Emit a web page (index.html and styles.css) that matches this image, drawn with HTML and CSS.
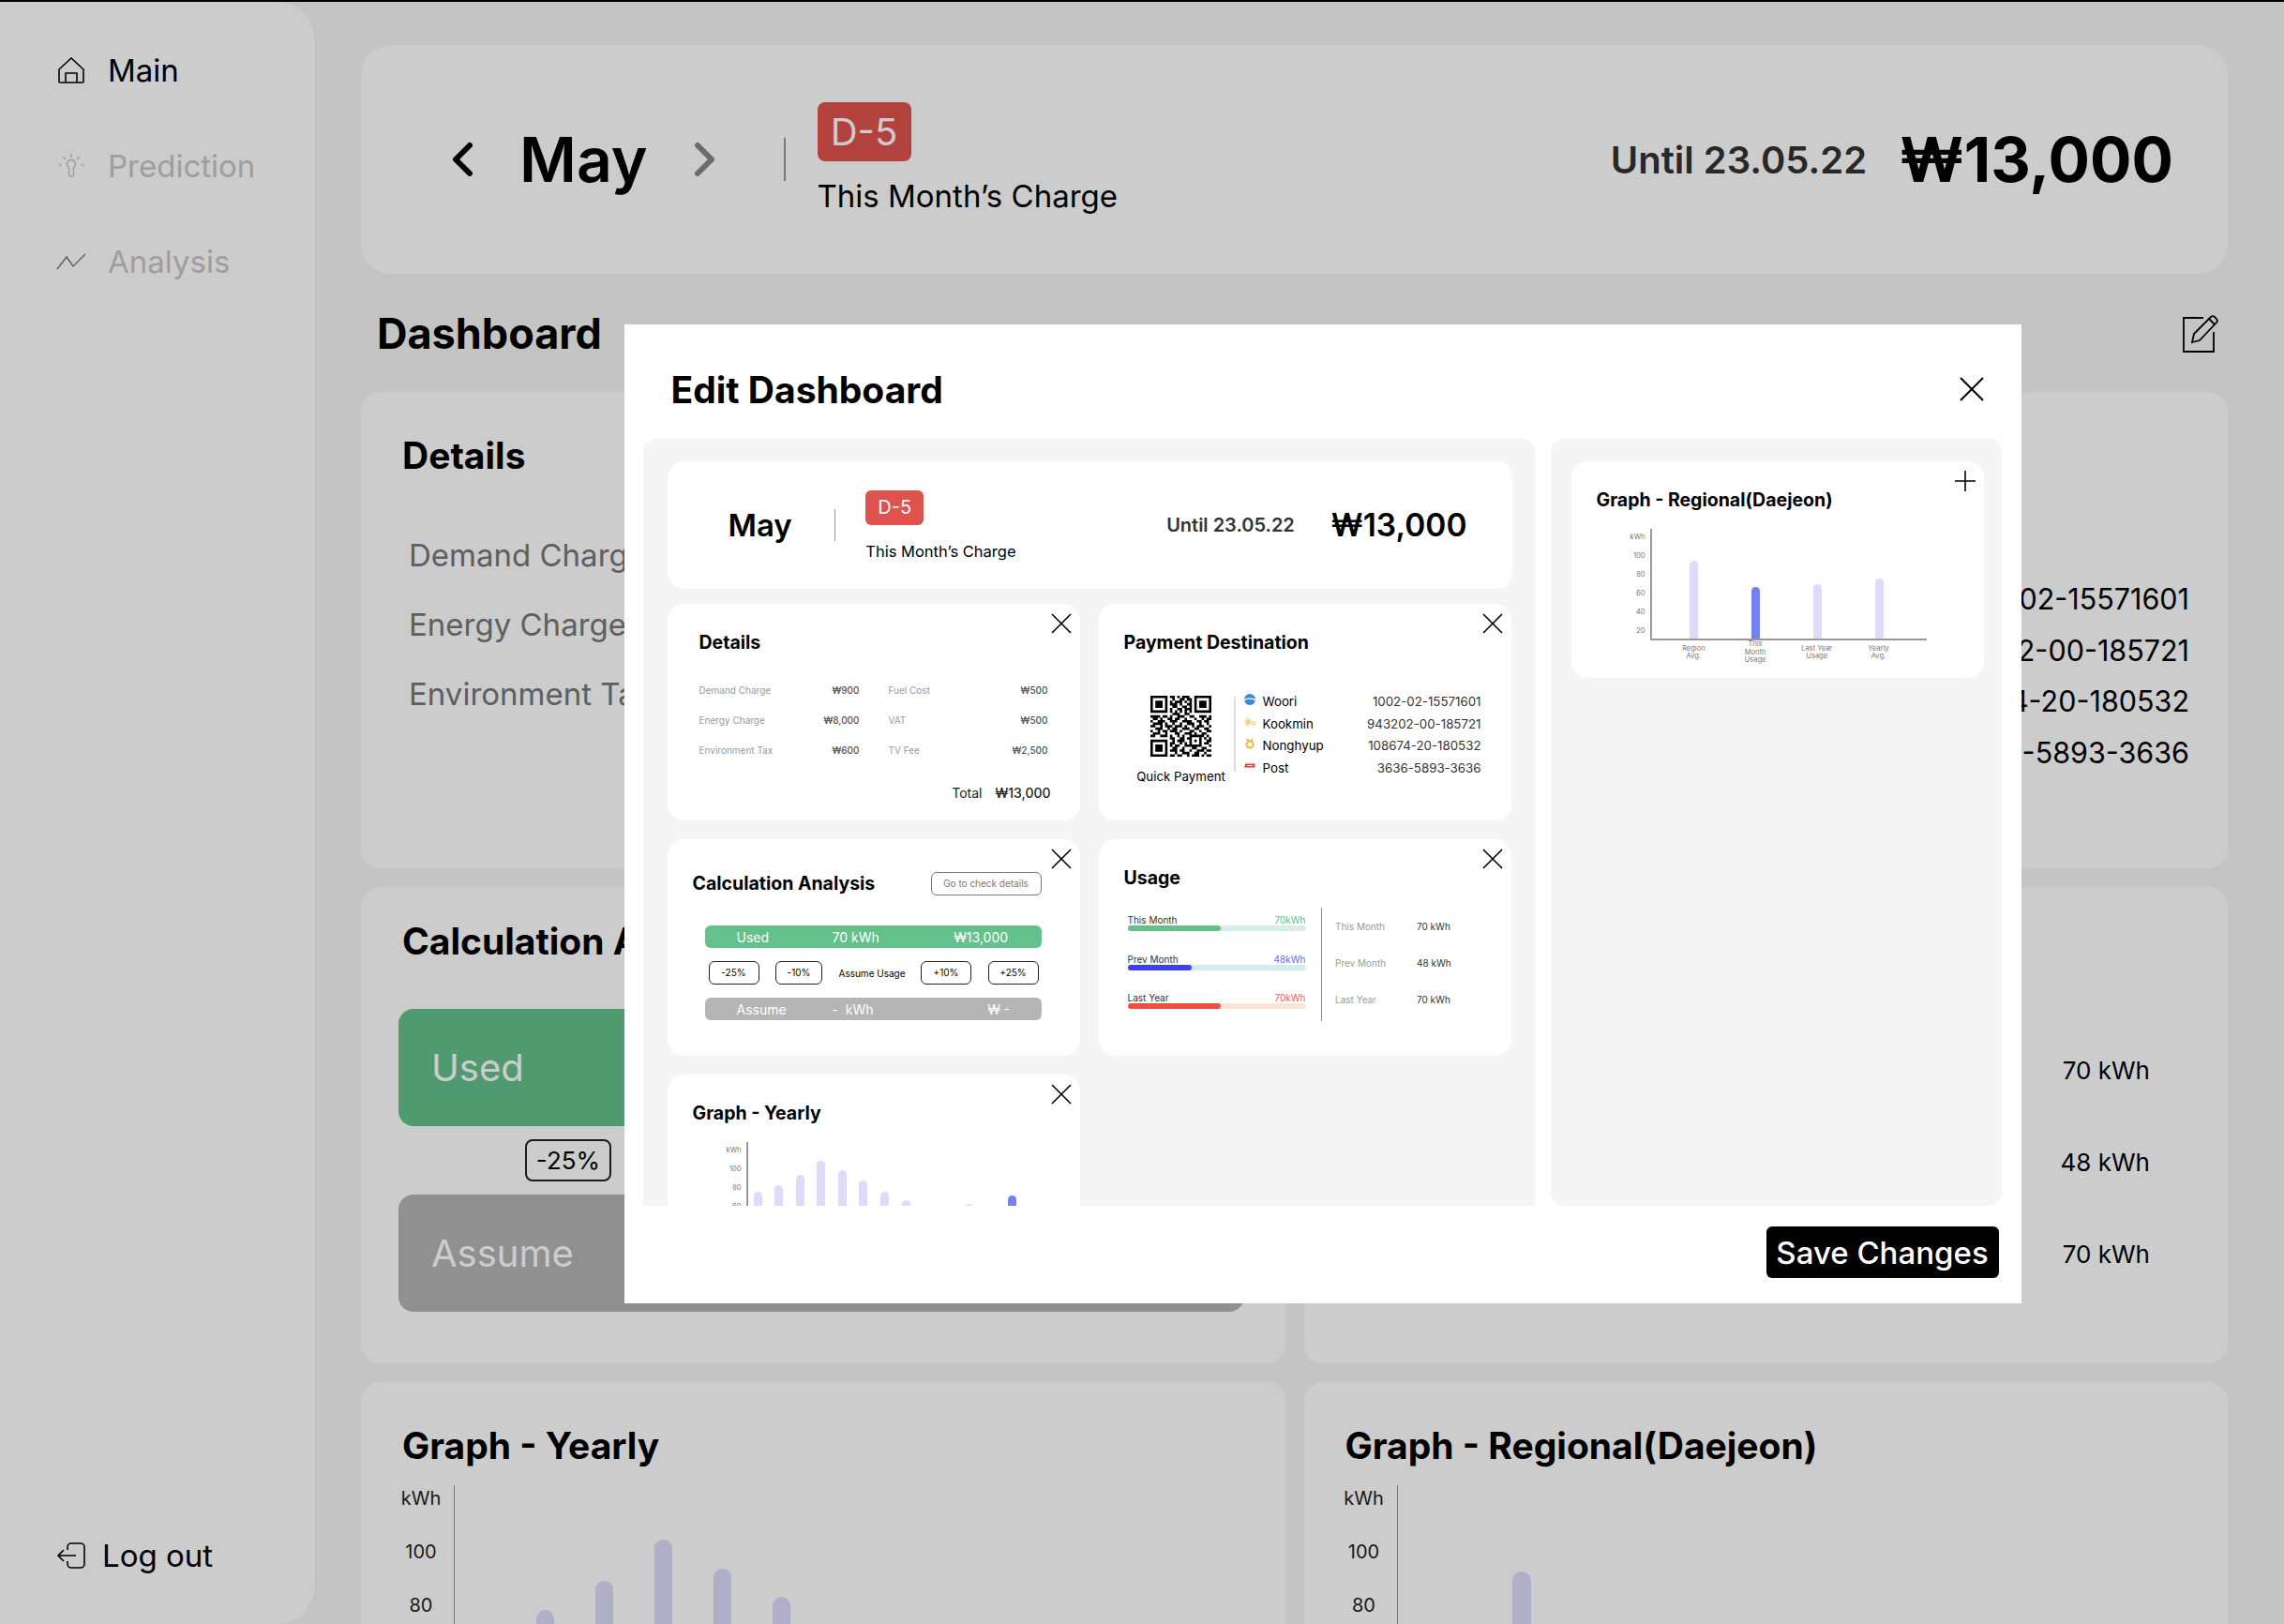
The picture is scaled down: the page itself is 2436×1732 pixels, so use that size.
FILE: index.html
```html
<!DOCTYPE html>
<html lang="en">
<head>
  <meta charset="UTF-8">
  <title>Edit Dashboard</title>
  <link rel="stylesheet" href="styles.css">
</head>
<body>
  <div class="app">
    <aside class="sidebar">
      <nav class="nav">
        <a class="nav-item active">
          <svg class="nav-icon" viewBox="0 0 28 28" fill="none" stroke="currentColor" stroke-width="1.6"><path d="M1 13L14 1l13 12v13a1 1 0 0 1-1 1H2a1 1 0 0 1-1-1z"/><path d="M8 27V17h12v10"/></svg>
          Main
        </a>
        <a class="nav-item">
          <svg class="nav-icon" viewBox="0 0 28 28" fill="none" stroke="currentColor" stroke-width="1.4"><path d="M10 14a4.5 4.5 0 1 1 8 0c-1 1-1.500 2-1.500 3v6a2 2 0 0 1-2 2h-1a2 2 0 0 1-2-2v-6c0-1-.5-2-1.500-3z"/><path d="M14 1v4M5 4l3 3M23 4l-3 3M1 13h3M24 13h3"/></svg>
          Prediction
        </a>
        <a class="nav-item">
          <svg class="nav-icon" viewBox="0 0 32 20" fill="none" stroke="#777" stroke-width="1.4"><path d="M1 18L11 5l7 10L31 2"/></svg>
          Analysis
        </a>
      </nav>
      <a class="nav-item logout">
        <svg class="nav-icon" viewBox="0 0 30 28" fill="none" stroke="currentColor" stroke-width="1.6"><path d="M11 8V5a4 4 0 0 1 4-4h10a4 4 0 0 1 4 4v18a4 4 0 0 1-4 4H15a4 4 0 0 1-4-4v-3"/><path d="M20 14H1M7 8l-6 6 6 6"/></svg>
        Log out
      </a>
    </aside>

    <main class="main">
      <section class="charge-card">
        <svg class="chevron" viewBox="0 0 24 36" fill="none" stroke="#000" stroke-width="6" stroke-linecap="round" stroke-linejoin="round"><path d="M20 3L5 18l15 15"/></svg>
        <div class="month">May</div>
        <svg class="chevron" viewBox="0 0 24 36" fill="none" stroke="#888" stroke-width="6" stroke-linecap="round" stroke-linejoin="round"><path d="M4 3l15 15L4 33"/></svg>
        <div class="charge-divider"></div>
        <div class="charge-info">
          <span class="badge">D-5</span>
          <span class="charge-label">This Month’s Charge</span>
        </div>
        <div class="charge-until">Until 23.05.22</div>
        <div class="charge-total">₩13,000</div>
      </section>

      <div class="dash-head">
        <h1>Dashboard</h1>
        <svg class="edit-icon" viewBox="0 0 40 42" fill="none" stroke="#000" stroke-width="1.8"><path d="M22 5H1v36h32V20"/><path d="M10 31l2-9L30 4a3 3 0 0 1 4 0l2 2a3 3 0 0 1 0 4L18 29z"/><path d="M28 6l6 6"/></svg>
      </div>

      <div class="dash-grid">
        <section class="card">
          <h2>Details</h2>
          <div class="bg-details">
            <div>Demand Charge</div>
            <div>Energy Charge</div>
            <div>Environment Tax</div>
          </div>
        </section>

        <section class="card">
          <h2>Payment Destination</h2>
          <div class="bg-accounts">
            <div>1002-02-15571601</div>
            <div>943202-00-185721</div>
            <div>108674-20-180532</div>
            <div>3636-5893-3636</div>
          </div>
        </section>

        <section class="card card-tight">
          <h2>Calculation Analysis</h2>
          <div class="bg-bar bg-bar-used">Used</div>
          <div class="bg-step">-25%</div>
          <div class="bg-bar bg-bar-assume">Assume</div>
        </section>

        <section class="card card-tight">
          <h2>Usage</h2>
          <div class="bg-usage">
            <div>70 kWh</div>
            <div>48 kWh</div>
            <div>70 kWh</div>
          </div>
        </section>

        <section class="card">
          <h2>Graph - Yearly</h2>
          <div class="chart chart-lg">
            <div class="chart-y"><span>kWh</span><span>100</span><span>80</span></div>
            <div class="plot plot-yearly">
              <i class="bar" style="height: 55%"></i>
              <i class="bar" style="height: 61%"></i>
              <i class="bar" style="height: 70%"></i>
              <i class="bar" style="height: 83%"></i>
              <i class="bar" style="height: 74%"></i>
              <i class="bar" style="height: 65%"></i>
              <i class="bar" style="height: 55%"></i>
              <i class="bar" style="height: 47%"></i>
              <i class="bar" style="height: 34%"></i>
              <i class="bar" style="height: 37%"></i>
              <i class="bar" style="height: 44%"></i>
              <i class="bar" style="height: 39%"></i>
              <i class="bar active" style="height: 51%"></i>
            </div>
          </div>
        </section>

        <section class="card">
          <h2>Graph - Regional(Daejeon)</h2>
          <div class="chart chart-lg">
            <div class="chart-y"><span>kWh</span><span>100</span><span>80</span></div>
            <div class="plot plot-regional">
              <i class="bar" style="height: 73%"></i>
              <i class="bar active" style="height: 47%"></i>
              <i class="bar" style="height: 50%"></i>
              <i class="bar" style="height: 55%"></i>
            </div>
          </div>
        </section>
      </div>
    </main>
  </div>

  <div class="overlay">
    <div class="modal">
      <header class="modal-head">
        <h2>Edit Dashboard</h2>
        <svg class="modal-close" viewBox="0 0 26 26" fill="none" stroke="#000" stroke-width="2"><path d="M1 1l24 24M25 1L1 25"/></svg>
      </header>

      <div class="modal-panels">
        <div class="panel">
          <section class="mini charge-mini">
            <div class="month-sm">May</div>
            <div class="divider-sm"></div>
            <div class="info-sm">
              <span class="badge-sm">D-5</span>
              <span class="label-sm">This Month’s Charge</span>
            </div>
            <div class="until-sm">Until 23.05.22</div>
            <div class="total-sm">₩13,000</div>
          </section>

          <div class="mini-grid">
            <section class="mini">
              <svg class="mini-action" viewBox="0 0 22 22" fill="none" stroke="#000" stroke-width="1.6"><path d="M1 1l20 20M21 1L1 21"/></svg>
              <h3 class="details-title">Details</h3>
              <div class="details-grid">
                <div class="details-row"><span>Demand Charge</span><b>₩900</b></div>
                <div class="details-row"><span>Fuel Cost</span><b>₩500</b></div>
                <div class="details-row"><span>Energy Charge</span><b>₩8,000</b></div>
                <div class="details-row"><span>VAT</span><b>₩500</b></div>
                <div class="details-row"><span>Environment Tax</span><b>₩600</b></div>
                <div class="details-row"><span>TV Fee</span><b>₩2,500</b></div>
              </div>
              <div class="details-total"><span>Total</span><b>₩13,000</b></div>
            </section>

            <section class="mini">
              <svg class="mini-action" viewBox="0 0 22 22" fill="none" stroke="#000" stroke-width="1.6"><path d="M1 1l20 20M21 1L1 21"/></svg>
              <h3>Payment Destination</h3>
              <div class="pay">
                <div class="pay-qr">
                  <svg class="qr" viewBox="0 0 25 25">
                    <path fill-rule="evenodd" d="M0 0h7v7H0zM1 1v5h5V1zM2 2h3v3H2zM18 0h7v7h-7zM19 1v5h5V1zM20 2h3v3h-3zM0 18h7v7H0zM1 19v5h5v-5zM2 20h3v3H2z"/>
                    <path fill="none" stroke="#000" d="M8 .5h2M11 .5h1M13 .5h3M9 1.500h1M12 1.500h2M15 1.500h2M8 2.500h1M10 2.500h3M14 2.500h1M16 2.500h1M8 3.500h3M12 3.500h1M15 3.500h2M9 4.500h2M13 4.500h2M16 4.500h1M8 5.500h1M11 5.500h2M14 5.500h3M8 6.500h1M10 6.500h1M12 6.500h1M14 6.500h1M16 6.500h1M9 7.500h3M14 7.500h2M0 8.500h4M5 8.500h2M8 8.500h1M11 8.500h3M16 8.500h2M20 8.500h3M24 8.500h1M1 9.500h2M4 9.500h1M7 9.500h2M10 9.500h2M14 9.500h1M18 9.500h1M21 9.500h1M23 9.500h2M0 10.500h1M3 10.500h3M8 10.500h3M13 10.500h4M19 10.500h2M22 10.500h2M1 11.500h4M6 11.500h1M9 11.500h1M12 11.500h1M15 11.500h3M20 11.500h1M23 11.500h1M0 12.500h2M4 12.500h1M6 12.500h3M10 12.500h3M14 12.500h1M17 12.500h1M19 12.500h3M24 12.500h1M2 13.500h3M7 13.500h1M9 13.500h2M13 13.500h3M18 13.500h2M22 13.500h2M0 14.500h1M3 14.500h1M5 14.500h2M8 14.500h3M12 14.500h1M16 14.500h2M20 14.500h1M23 14.500h2M1 15.500h3M6 15.500h1M10 15.500h2M14 15.500h3M18 15.500h1M21 15.500h2M0 16.500h2M4 16.500h3M8 16.500h1M11 16.500h1M13 16.500h1M16 16.500h6M23 16.500h1M8 17.500h2M12 17.500h2M15 17.500h2M20 17.500h1M22 17.500h1M24 17.500h1M9 18.500h1M11 18.500h3M16 18.500h1M18 18.500h1M20 18.500h1M23 18.500h2M8 19.500h2M12 19.500h1M14 19.500h1M16 19.500h1M20 19.500h1M22 19.500h2M8 20.500h1M10 20.500h2M14 20.500h2M16 20.500h5M24 20.500h1M9 21.500h2M13 21.500h1M17 21.500h2M21 21.500h2M8 22.500h3M12 22.500h2M16 22.500h1M19 22.500h3M23 22.500h2M10 23.500h1M13 23.500h3M18 23.500h2M22 23.500h1M8 24.500h2M11 24.500h2M15 24.500h1M17 24.500h3M21 24.500h1M23 24.500h2"/>
                  </svg>
                  <span>Quick Payment</span>
                </div>
                <div class="pay-divider"></div>
                <div class="pay-list">
                  <div class="pay-row">
                    <svg class="bank" viewBox="0 0 12 12"><circle cx="6" cy="6" r="6" fill="#3b8ad8"/><path d="M0 7.500c2-2.500 10-2.500 12 0v-1.500c-2-2-10-2-12 0z" fill="#fff"/></svg>
                    <span>Woori</span><b>1002-02-15571601</b>
                  </div>
                  <div class="pay-row">
                    <svg class="bank" viewBox="0 0 12 12" fill="none" stroke="#f6bd4a" stroke-width="1"><path d="M4 1v10M0 6h8M1 3l6 6M7 3L1 9"/><circle cx="10" cy="7.500" r="1.500"/></svg>
                    <span>Kookmin</span><b>943202-00-185721</b>
                  </div>
                  <div class="pay-row">
                    <svg class="bank" viewBox="0 0 12 12" fill="none" stroke="#f4b53f" stroke-width="2"><circle cx="6" cy="7" r="3.500"/><path d="M3 1l1.500 2M9 1L7.500 3"/></svg>
                    <span>Nonghyup</span><b>108674-20-180532</b>
                  </div>
                  <div class="pay-row">
                    <svg class="bank" viewBox="0 0 12 12"><path d="M1 3.500h11l-1 2 1 2H0l1-2z" fill="#e2402f"/><path d="M3 5.500h6" stroke="#fff"/></svg>
                    <span>Post</span><b>3636-5893-3636</b>
                  </div>
                </div>
              </div>
            </section>

            <section class="mini">
              <svg class="mini-action" viewBox="0 0 22 22" fill="none" stroke="#000" stroke-width="1.6"><path d="M1 1l20 20M21 1L1 21"/></svg>
              <div class="calc-head">
                <h3>Calculation Analysis</h3>
                <span class="calc-link">Go to check details</span>
              </div>
              <div class="calc-bar calc-used"><span>Used</span><span>70 kWh</span><span>₩13,000</span></div>
              <div class="calc-steps">
                <span class="step">-25%</span>
                <span class="step step-narrow">-10%</span>
                <span class="step-label">Assume Usage</span>
                <span class="step">+10%</span>
                <span class="step">+25%</span>
              </div>
              <div class="calc-bar calc-assume"><span>Assume</span><span>-&nbsp; kWh</span><span class="calc-dash">₩ -</span></div>
            </section>

            <section class="mini">
              <svg class="mini-action" viewBox="0 0 22 22" fill="none" stroke="#000" stroke-width="1.6"><path d="M1 1l20 20M21 1L1 21"/></svg>
              <h3>Usage</h3>
              <div class="usage">
                <div class="usage-bars">
                  <div class="usage-item">
                    <div class="usage-text"><span>This Month</span><span class="val-green">70kWh</span></div>
                    <div class="track track-green"><div class="fill fill-green" style="width: 52.6%"></div></div>
                  </div>
                  <div class="usage-item">
                    <div class="usage-text"><span>Prev Month</span><span class="val-blue">48kWh</span></div>
                    <div class="track track-blue"><div class="fill fill-blue" style="width: 36%"></div></div>
                  </div>
                  <div class="usage-item">
                    <div class="usage-text"><span>Last Year</span><span class="val-red">70kWh</span></div>
                    <div class="track track-red"><div class="fill fill-red" style="width: 52.6%"></div></div>
                  </div>
                </div>
                <div class="usage-divider"></div>
                <div class="usage-list">
                  <div class="usage-row"><span>This Month</span><b>70 kWh</b></div>
                  <div class="usage-row"><span>Prev Month</span><b>48 kWh</b></div>
                  <div class="usage-row"><span>Last Year</span><b>70 kWh</b></div>
                </div>
              </div>
            </section>

            <section class="mini">
              <svg class="mini-action" viewBox="0 0 22 22" fill="none" stroke="#000" stroke-width="1.6"><path d="M1 1l20 20M21 1L1 21"/></svg>
              <h3>Graph - Yearly</h3>
              <div class="chart">
                <div class="chart-y"><span>kWh</span><span>100</span><span>80</span><span>60</span></div>
                <div class="plot plot-yearly">
                  <i class="bar" style="height: 55%"></i>
                  <i class="bar" style="height: 61%"></i>
                  <i class="bar" style="height: 70%"></i>
                  <i class="bar" style="height: 83%"></i>
                  <i class="bar" style="height: 74%"></i>
                  <i class="bar" style="height: 65%"></i>
                  <i class="bar" style="height: 55%"></i>
                  <i class="bar" style="height: 47%"></i>
                  <i class="bar" style="height: 34%"></i>
                  <i class="bar" style="height: 37%"></i>
                  <i class="bar" style="height: 44%"></i>
                  <i class="bar" style="height: 39%"></i>
                  <i class="bar active" style="height: 51%"></i>
                </div>
              </div>
            </section>
          </div>
        </div>

        <div class="panel">
          <section class="mini">
            <svg class="mini-action" viewBox="0 0 22 22" fill="none" stroke="#000" stroke-width="1.6"><path d="M11 0v22M0 11h22"/></svg>
            <h3>Graph - Regional(Daejeon)</h3>
            <div class="chart">
              <div class="chart-y"><span>kWh</span><span>100</span><span>80</span><span>60</span><span>40</span><span>20</span></div>
              <div class="plot plot-regional">
                <i class="bar" style="height: 71%"></i>
                <i class="bar active" style="height: 47%"></i>
                <i class="bar" style="height: 50%"></i>
                <i class="bar" style="height: 55%"></i>
              </div>
            </div>
            <div class="chart-x">
              <span>Region<br>Avg.</span>
              <span>This<br>Month<br>Usage</span>
              <span>Last Year<br>Usage</span>
              <span>Yearly<br>Avg.</span>
            </div>
          </section>
        </div>
      </div>

      <footer class="modal-foot">
        <button class="save-btn">Save Changes</button>
      </footer>
    </div>
  </div>
</body>
</html>
```

FILE: styles.css
```css
* {
  box-sizing: border-box;
}

html, body {
  height: 100%;
  margin: 0;
  overflow: hidden;
}

body {
  font-family: Inter, "Noto Sans", sans-serif;
  background: #f5f5f5;
  border-top: 2px solid #000;
  color: #000;
}

h1, h2, h3 {
  margin: 0;
  font-weight: 700;
}

.app {
  display: flex;
  height: 1730px;
  overflow: hidden;
}

/* sidebar */
.sidebar {
  width: 337px;
  flex-shrink: 0;
  height: 100%;
  display: flex;
  flex-direction: column;
  justify-content: space-between;
  padding: 47px 0 47px 60px;
  background: #fff;
  border-right: 1px solid #ebebeb;
  border-radius: 0 40px 40px 0;
}

.nav {
  display: flex;
  flex-direction: column;
  gap: 50px;
}

.nav-item {
  display: flex;
  align-items: center;
  gap: 23px;
  height: 52px;
  font-size: 33px;
  color: #c6c6c6;
}

.nav-item.active, .logout {
  color: #000;
}

.nav-icon {
  width: 32px;
  height: 28px;
}

.logout {
  gap: 17px;
}

/* main */
.main {
  flex: 1;
  padding: 46px 60px 0 48px;
}

.charge-card {
  display: flex;
  align-items: center;
  height: 244px;
  padding: 0 58px 0 96px;
  background: #fff;
  border-radius: 32px;
}

.chevron {
  width: 24px;
  height: 36px;
}

.month {
  margin: 0 49px;
  font-size: 66px;
  font-weight: 600;
  line-height: 1;
}

.charge-divider {
  width: 2px;
  height: 46px;
  margin: 0 34px 0 72px;
  background: #999;
}

.charge-info {
  display: flex;
  flex-direction: column;
  align-items: flex-start;
  gap: 15px;
}

.badge {
  width: 100px;
  height: 63px;
  border-radius: 8px;
  background: #e0524d;
  color: #fff;
  font-size: 40px;
  line-height: 63px;
  text-align: center;
}

.charge-label {
  font-size: 33px;
  line-height: 44px;
}

.charge-until {
  margin-left: auto;
  font-size: 40px;
  font-weight: 600;
  color: #333;
}

.charge-total {
  margin-left: 35px;
  font-size: 66px;
  font-weight: 700;
}

.dash-head {
  display: flex;
  align-items: center;
  justify-content: space-between;
  height: 62px;
  margin: 32px 0;
  padding: 0 8px 0 17px;
}

.dash-head h1 {
  font-size: 45px;
}

.edit-icon {
  width: 40px;
  height: 42px;
}

.dash-grid {
  display: grid;
  grid-template-columns: 1fr 1fr;
  grid-template-rows: 508px 508px;
  gap: 20px;
}

.card {
  padding: 44px 44px 0;
  background: #fff;
  border-radius: 20px;
}

.card-tight {
  padding-top: 34px;
}

.card h2 {
  font-size: 39px;
  line-height: 48px;
}

.bg-details {
  margin-top: 45px;
  padding-left: 7px;
  font-size: 33px;
  line-height: 74px;
  color: #777;
}

.bg-accounts {
  margin: 102px -3px 0 0;
  font-size: 30.500px;
  line-height: 54.500px;
  text-align: right;
}

.bg-bar {
  display: flex;
  align-items: center;
  height: 125px;
  margin-left: -4px;
  padding-left: 35px;
  border-radius: 16px;
  color: #fff;
  font-size: 40px;
}

.bg-bar-used {
  margin-top: 48px;
  background: #65c18c;
}

.bg-bar-assume {
  background: #b5b5b5;
}

.bg-step {
  width: 92px;
  height: 45px;
  margin: 14px 0 14px 131px;
  border: 2px solid #222;
  border-radius: 8px;
  font-size: 26px;
  line-height: 41px;
  text-align: center;
}

.bg-usage {
  margin: 65px 39px 0 0;
  font-size: 26px;
  line-height: 98px;
  text-align: right;
}

/* charts, same data in both sizes */
.chart {
  display: flex;
  margin-top: 19px;
}

.chart-y {
  display: flex;
  flex-direction: column;
  align-items: flex-end;
  width: 57px;
  margin-top: -1px;
  padding-right: 5px;
  color: #777;
  font-size: 7.500px;
  line-height: 20px;
}

.plot {
  display: flex;
  align-items: flex-end;
  width: 295px;
  height: 119px;
  border-left: 2px solid #999;
  border-bottom: 2px solid #999;
}

.plot-yearly {
  padding-left: 6px;
  gap: 13.600px;
}

.plot-regional {
  padding-left: 40px;
  gap: 57px;
}

.bar {
  display: block;
  width: 9px;
  border-radius: 5px 5px 0 0;
  background: #dedbfa;
}

.bar.active {
  background: #7381f5;
}

.chart-x {
  display: flex;
  height: 26px;
  margin-left: 71px;
  color: #777;
  font-size: 7.500px;
  line-height: 8.500px;
  text-align: center;
}

.chart-x span {
  width: 65.700px;
  align-self: center;
}

.chart-lg {
  margin-top: 18px;
}

.chart-lg .chart-y {
  width: 40px;
  margin-top: -14px;
  padding: 0;
  align-items: center;
  color: #222;
  font-size: 20px;
  line-height: 57px;
}

.chart-lg .plot {
  width: 800px;
  height: 342px;
  margin-left: 15px;
  border-left-width: 1.500px;
  border-bottom-width: 1.500px;
}

.chart-lg .plot-yearly {
  padding-left: 24px;
  gap: 44.500px;
}

.chart-lg .plot-regional {
  padding-left: 122px;
  gap: 170px;
}

.chart-lg .bar {
  width: 20px;
  border-radius: 10px 10px 0 0;
}

/* modal */
.overlay {
  position: fixed;
  inset: 0;
  display: flex;
  align-items: center;
  justify-content: center;
  padding: 4px 0 0 385px;
  background: rgba(0, 0, 0, 0.2);
}

.modal {
  width: 1490px;
  height: 1044px;
  padding: 0 21px 0 20px;
  background: #fff;
}

.modal-head {
  display: flex;
  align-items: center;
  justify-content: space-between;
  height: 122px;
  padding: 16px 19px 0 30px;
}

.modal-head h2 {
  font-size: 39px;
}

.modal-close {
  width: 26px;
  height: 26px;
}

.modal-panels {
  display: grid;
  grid-template-columns: 951px 481px;
  gap: 17px;
  height: 818px;
}

.panel {
  height: 100%;
  padding: 24px 24px 0 26px;
  overflow: hidden;
  background: #f5f5f5;
  border-radius: 14px 14px 0 0;
}

.panel + .panel {
  padding: 24px 19px 0 22px;
  border-radius: 14px;
}

.modal-foot {
  display: flex;
  justify-content: flex-end;
  padding: 22px 3px 0 0;
}

.save-btn {
  width: 248px;
  height: 55px;
  border: 0;
  border-radius: 6px;
  background: #000;
  color: #fff;
  font-family: inherit;
  font-size: 33px;
  font-weight: 500;
}

/* mini cards inside modal */
.mini {
  position: relative;
  height: 231px;
  padding: 29px 27px 0;
  background: #fff;
  border-radius: 18px;
}

.mini h3 {
  font-size: 19.500px;
  line-height: 24px;
}

.mini-action {
  position: absolute;
  top: 10px;
  right: 9px;
  width: 22px;
  height: 22px;
}

.mini-grid {
  display: grid;
  grid-template-columns: 440px 440px;
  gap: 20px;
}

.charge-mini {
  display: flex;
  align-items: center;
  height: 136px;
  margin-bottom: 16px;
  padding: 0 48px 0 65px;
}

.month-sm {
  font-size: 33px;
  font-weight: 600;
}

.divider-sm {
  width: 1.500px;
  height: 34px;
  margin: 0 32px 0 45px;
  background: #999;
}

.info-sm {
  display: flex;
  flex-direction: column;
  align-items: flex-start;
  gap: 17px;
  margin-top: 2px;
}

.badge-sm {
  width: 62px;
  height: 37px;
  border-radius: 6px;
  background: #e0524d;
  color: #fff;
  font-size: 20px;
  line-height: 37px;
  text-align: center;
}

.label-sm {
  font-size: 16.500px;
  line-height: 22px;
}

.until-sm {
  margin-left: auto;
  font-size: 20px;
  font-weight: 600;
  color: #333;
}

.total-sm {
  margin-left: 39px;
  font-size: 33.500px;
  font-weight: 600;
}

.details-title {
  margin-left: 7px;
}

.details-grid {
  display: grid;
  grid-template-columns: 171px 170px;
  column-gap: 31px;
  margin: 23px 0 0 7px;
}

.details-row {
  display: flex;
  justify-content: space-between;
  font-size: 10px;
  line-height: 32px;
  color: #999;
}

.details-row b {
  font-weight: 500;
  color: #555;
}

.details-total {
  display: flex;
  justify-content: flex-end;
  gap: 14px;
  margin: 20px 4px 0 0;
  font-size: 14px;
  line-height: 20px;
  color: #222;
}

.details-total b {
  font-weight: 500;
}

.pay {
  display: flex;
  align-items: flex-start;
  margin: 45px 0 0 14px;
}

.pay-qr {
  display: flex;
  flex-direction: column;
  align-items: center;
  gap: 13px;
  width: 94px;
  font-size: 13.300px;
  line-height: 17px;
  white-space: nowrap;
}

.qr {
  display: block;
  width: 65px;
  height: 65px;
}

.pay-divider {
  width: 2px;
  height: 80px;
  margin: 1px 9px 0;
  background: #ddd;
}

.pay-list {
  flex: 1;
  margin: -6px 5px 0 0;
  font-size: 13.300px;
}

.pay-row {
  display: flex;
  align-items: center;
  height: 23.700px;
}

.pay-row span {
  margin-left: 8px;
}

.pay-row b {
  margin-left: auto;
  font-weight: 400;
  color: #333;
}

.bank {
  width: 12px;
  height: 12px;
  margin-top: -4px;
}

.calc-head {
  display: flex;
  align-items: center;
  justify-content: space-between;
  height: 25px;
  margin: 5px 14px 0 0;
}

.calc-link {
  width: 118px;
  height: 25px;
  margin-top: 2px;
  border: 1.500px solid #777;
  border-radius: 6px;
  font-size: 10px;
  line-height: 22px;
  text-align: center;
  color: #777;
}

.calc-bar {
  display: grid;
  grid-template-columns: 102px 130px auto;
  align-items: center;
  height: 24px;
  margin: 0 14px 0 13px;
  padding-left: 34px;
  border-radius: 6px;
  color: #fff;
  font-size: 14px;
}

.calc-used {
  margin-top: 33px;
  background: #65c18c;
}

.calc-assume {
  background: #b5b5b5;
}

.calc-dash {
  padding-left: 36px;
}

.calc-steps {
  display: flex;
  align-items: center;
  gap: 17.500px;
  height: 25px;
  margin: 14px 0 14px 17px;
  font-size: 10px;
}

.step {
  width: 54px;
  height: 25px;
  border: 1.500px solid #222;
  border-radius: 6px;
  line-height: 22px;
  text-align: center;
}

.step-narrow {
  width: 50px;
}

.step-label {
  width: 70px;
  text-align: center;
  white-space: nowrap;
}

.usage {
  display: flex;
  align-items: flex-start;
  margin-top: 20px;
}

.usage-bars {
  width: 190px;
  margin: 8px 0 0 4px;
}

.usage-item + .usage-item {
  margin-top: 24.500px;
}

.usage-text {
  display: flex;
  justify-content: space-between;
  height: 11px;
  font-size: 10px;
  line-height: 11px;
  color: #333;
}

.val-green {
  color: #65c18c;
}

.val-blue {
  color: #6a6af0;
}

.val-red {
  color: #e8605a;
}

.track {
  height: 6px;
  border-radius: 3px;
}

.fill {
  height: 100%;
  border-radius: 3px;
}

.track-green {
  background: #d9eee2;
}

.fill-green {
  background: #65c18c;
}

.track-blue {
  background: #d4ebef;
}

.fill-blue {
  background: #4040ee;
}

.track-red {
  background: #fbe4d8;
}

.fill-red {
  background: #ee5040;
}

.usage-divider {
  width: 1.500px;
  height: 121px;
  margin: 0 14px 0 16px;
  background: #888;
}

.usage-row {
  display: flex;
  height: 39px;
  align-items: center;
  font-size: 10px;
  color: #999;
}

.usage-row span {
  width: 87px;
}

.usage-row b {
  font-weight: 400;
  color: #333;
}
```
